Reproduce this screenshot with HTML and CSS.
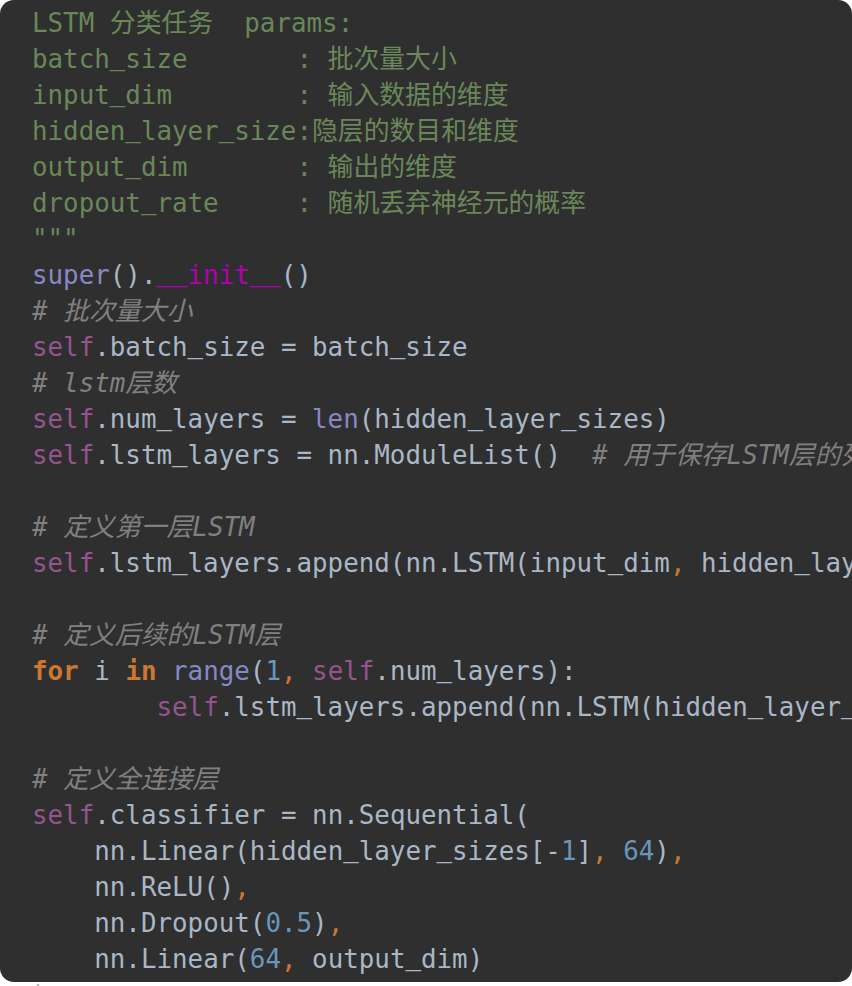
FILE: index.html
```html
<!DOCTYPE html>
<html lang="zh">
<head>
<meta charset="utf-8">
<title>LSTM code</title>
<link rel="stylesheet" href="styles.css">
</head>
<body>
<div class="editor">
<pre class="code"><span class="doc">LSTM 分类任务  params:</span>
<span class="doc">batch<span class="u">_</span>size       : 批次量大小</span>
<span class="doc">input<span class="u">_</span>dim        : 输入数据的维度</span>
<span class="doc">hidden<span class="u">_</span>layer<span class="u">_</span>size:隐层的数目和维度</span>
<span class="doc">output<span class="u">_</span>dim       : 输出的维度</span>
<span class="doc">dropout<span class="u">_</span>rate     : 随机丢弃神经元的概率</span>
<span class="doc">"""</span>
<span class="bi">super</span>().<span class="magic"><span class="u">_</span><span class="u">_</span>init<span class="u">_</span><span class="u">_</span></span>()
<span class="cm"># 批次量大小</span>
<span class="slf">self</span>.batch<span class="u">_</span>size = batch<span class="u">_</span>size
<span class="cm"># lstm层数</span>
<span class="slf">self</span>.num<span class="u">_</span>layers = <span class="bi">len</span>(hidden<span class="u">_</span>layer<span class="u">_</span>sizes)
<span class="slf">self</span>.lstm<span class="u">_</span>layers = nn.ModuleList()  <span class="cm"># 用于保存LSTM层的列表</span>

<span class="cm"># 定义第一层LSTM</span>
<span class="slf">self</span>.lstm<span class="u">_</span>layers.append(nn.LSTM(input<span class="u">_</span>dim<span class="kw">,</span> hidden<span class="u">_</span>layer<span class="u">_</span>sizes[<span class="num">0</span>]<span class="kw">,</span> batch<span class="u">_</span>first=<span class="kwb">True</span>))

<span class="cm"># 定义后续的LSTM层</span>
<span class="kwb">for</span> i <span class="kwb">in</span> <span class="bi">range</span>(<span class="num">1</span><span class="kw">,</span> <span class="slf">self</span>.num<span class="u">_</span>layers):
        <span class="slf">self</span>.lstm<span class="u">_</span>layers.append(nn.LSTM(hidden<span class="u">_</span>layer<span class="u">_</span>sizes[i - <span class="num">1</span>]<span class="kw">,</span> hidden<span class="u">_</span>layer<span class="u">_</span>sizes[i]<span class="kw">,</span> batch<span class="u">_</span>first=<span class="kwb">True</span>))

<span class="cm"># 定义全连接层</span>
<span class="slf">self</span>.classifier = nn.Sequential(
    nn.Linear(hidden<span class="u">_</span>layer<span class="u">_</span>sizes[-<span class="num">1</span>]<span class="kw">,</span> <span class="num">64</span>)<span class="kw">,</span>
    nn.ReLU()<span class="kw">,</span>
    nn.Dropout(<span class="num">0.5</span>)<span class="kw">,</span>
    nn.Linear(<span class="num">64</span><span class="kw">,</span> output<span class="u">_</span>dim)
)</pre>
</div>
</body>
</html>
```
FILE: styles.css
```css
html, body {
  margin: 0;
  padding: 0;
  background: #ffffff;
}
html {
  overflow: hidden;
}
body {
  width: 852px;
  height: 986px;
  overflow: hidden;
}
.editor {
  width: 852px;
  height: 982px;
  background: #2f2f2f;
  border-radius: 14px;
  overflow-x: clip;
  overflow-y: visible;
}
.code {
  margin: 0;
  padding: 5px 0 0 32px;
  font-family: "DejaVu Sans Mono", "Noto Sans CJK SC", monospace;
  font-size: 25.85px;
  line-height: 36px;
  color: #a9b7c6;
  white-space: pre;
}
.u {
  font-family: "Liberation Mono", monospace;
  font-style: normal;
  line-height: 0;
}
.doc { color: #6a8759; }
.cm { color: #808080; font-style: italic; }
.slf { color: #94558d; }
.bi { color: #8888c6; }
.magic { color: #b200b2; }
.kw { color: #cc7832; }
.kwb { color: #cc7832; font-weight: bold; }
.num { color: #6897bb; }
```
